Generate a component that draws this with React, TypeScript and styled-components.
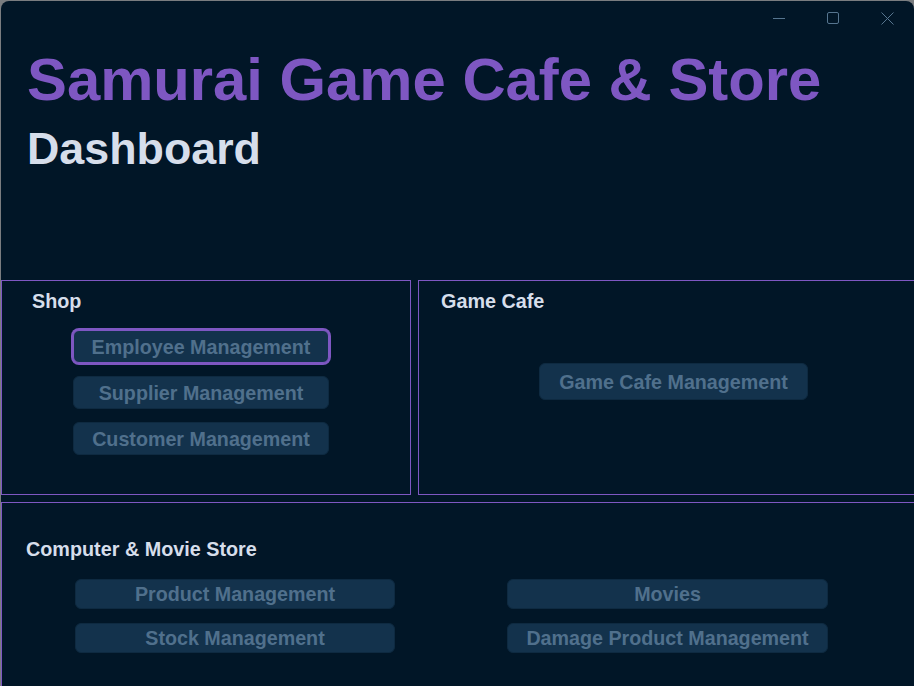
import React from "react";
import styled, { createGlobalStyle, css } from "styled-components";

const GlobalStyle = createGlobalStyle`
  html, body {
    margin: 0;
    padding: 0;
    background: #7a7d80;
    overflow: hidden;
  }
  body {
    font-family: "Liberation Sans", Arial, sans-serif;
  }
`;

const C = {
  bg: "#011627",
  purple: "#7e57c2",
  fg: "#d6deeb",
  btnBg: "#13324c",
  btnBorder: "#0e2a41",
  btnText: "#50708c",
  ctrl: "#56758f",
};

const Window = styled.div`
  margin: 1px 0 0 1px;
  width: 913px;
  height: 685px;
  background: ${C.bg};
  border-radius: 8px 8px 0 0;
  overflow: hidden;
  display: flex;
  flex-direction: column;
`;

const TitleBar = styled.div`
  height: 34px;
  display: flex;
  justify-content: flex-end;
  align-items: center;
  flex-shrink: 0;
`;

const CtrlButton = styled.div`
  width: 54px;
  height: 34px;
  display: flex;
  align-items: center;
  justify-content: center;
  color: ${C.ctrl};
`;

const Header = styled.header`
  padding: 15px 0 0 26px;
  height: 245px;
  box-sizing: border-box;
  flex-shrink: 0;
`;

const AppTitle = styled.h1`
  margin: 0;
  font-size: 59.8px;
  line-height: 60px;
  font-weight: 700;
  color: ${C.purple};
  white-space: nowrap;
`;

const SubTitle = styled.h2`
  margin: 16px 0 0 0;
  font-size: 44.8px;
  line-height: 44px;
  font-weight: 700;
  color: ${C.fg};
`;

const SectionRow = styled.div`
  display: flex;
  gap: 7px;
  flex-shrink: 0;
`;

const Frame = styled.section<{ $w: number; $h?: number }>`
  border: 1px solid ${C.purple};
  width: ${(p) => p.$w}px;
  ${(p) => (p.$h ? `height: ${p.$h}px;` : "")}
  box-sizing: border-box;
  flex-shrink: 0;
`;

const SectionLabel = styled.div<{ $left: number; $top: number }>`
  margin: ${(p) => p.$top}px 0 0 ${(p) => p.$left}px;
  font-size: 19.8px;
  line-height: 22px;
  font-weight: 700;
  color: ${C.fg};
  white-space: nowrap;
`;

const ButtonColumn = styled.div<{ $left: number; $top: number; $gap: number }>`
  display: flex;
  flex-direction: column;
  align-items: flex-start;
  gap: ${(p) => p.$gap}px;
  margin: ${(p) => p.$top}px 0 0 ${(p) => p.$left}px;
`;

const ButtonGrid = styled.div`
  display: grid;
  grid-template-columns: 320px 321px;
  column-gap: 112px;
  row-gap: 14px;
  margin: 19px 0 0 73px;
`;

const NavButton = styled.button<{ $w: number; $h: number; $focused?: boolean }>`
  width: ${(p) => p.$w}px;
  height: ${(p) => p.$h}px;
  box-sizing: border-box;
  background: ${C.btnBg};
  border: 1px solid ${C.btnBorder};
  border-radius: 6px;
  color: ${C.btnText};
  font-family: "Liberation Sans", Arial, sans-serif;
  font-size: 19.7px;
  font-weight: 700;
  padding: 1px 0 0 0;
  white-space: nowrap;
  display: flex;
  align-items: center;
  justify-content: center;
  cursor: pointer;
  ${(p) =>
    p.$focused &&
    css`
      border-color: ${C.purple};
      box-shadow: 0 0 0 2px ${C.purple};
    `}
`;

const BottomFrame = styled(Frame)`
  margin-top: 7px;
  flex: 1 0 auto;
  height: 200px;
`;

const MinIcon = () => (
  <svg width="12" height="12" viewBox="0 0 12 12">
    <line x1="0" y1="6.5" x2="12" y2="6.5" stroke="currentColor" strokeWidth="1" />
  </svg>
);
const MaxIcon = () => (
  <svg width="12" height="12" viewBox="0 0 12 12">
    <rect x="0.5" y="0.5" width="11" height="11" rx="1.5" fill="none" stroke="currentColor" strokeWidth="1" />
  </svg>
);
const CloseIcon = () => (
  <svg width="13" height="13" viewBox="0 0 13 13">
    <path d="M0.5 0.5 L12.5 12.5 M12.5 0.5 L0.5 12.5" stroke="currentColor" strokeWidth="1" fill="none" />
  </svg>
);

export default function App() {
  return (
    <>
      <GlobalStyle />
      <Window>
        <TitleBar>
          <CtrlButton>
            <MinIcon />
          </CtrlButton>
          <CtrlButton>
            <MaxIcon />
          </CtrlButton>
          <CtrlButton>
            <CloseIcon />
          </CtrlButton>
        </TitleBar>
        <Header>
          <AppTitle>Samurai Game Cafe &amp; Store</AppTitle>
          <SubTitle>Dashboard</SubTitle>
        </Header>
        <SectionRow>
          <Frame $w={410} $h={215}>
            <SectionLabel $left={30} $top={9}>Shop</SectionLabel>
            <ButtonColumn $left={71} $top={18} $gap={13}>
              <NavButton $w={256} $h={33} $focused>Employee Management</NavButton>
              <NavButton $w={256} $h={33}>Supplier Management</NavButton>
              <NavButton $w={256} $h={33}>Customer Management</NavButton>
            </ButtonColumn>
          </Frame>
          <Frame $w={511} $h={215}>
            <SectionLabel $left={22} $top={9}>Game Cafe</SectionLabel>
            <ButtonColumn $left={120} $top={51} $gap={0}>
              <NavButton $w={269} $h={37}>Game Cafe Management</NavButton>
            </ButtonColumn>
          </Frame>
        </SectionRow>
        <BottomFrame $w={960}>
          <SectionLabel $left={24} $top={35}>Computer &amp; Movie Store</SectionLabel>
          <ButtonGrid>
            <NavButton $w={320} $h={30}>Product Management</NavButton>
            <NavButton $w={321} $h={30}>Movies</NavButton>
            <NavButton $w={320} $h={30}>Stock Management</NavButton>
            <NavButton $w={321} $h={30}>Damage Product Management</NavButton>
          </ButtonGrid>
        </BottomFrame>
      </Window>
    </>
  );
}
